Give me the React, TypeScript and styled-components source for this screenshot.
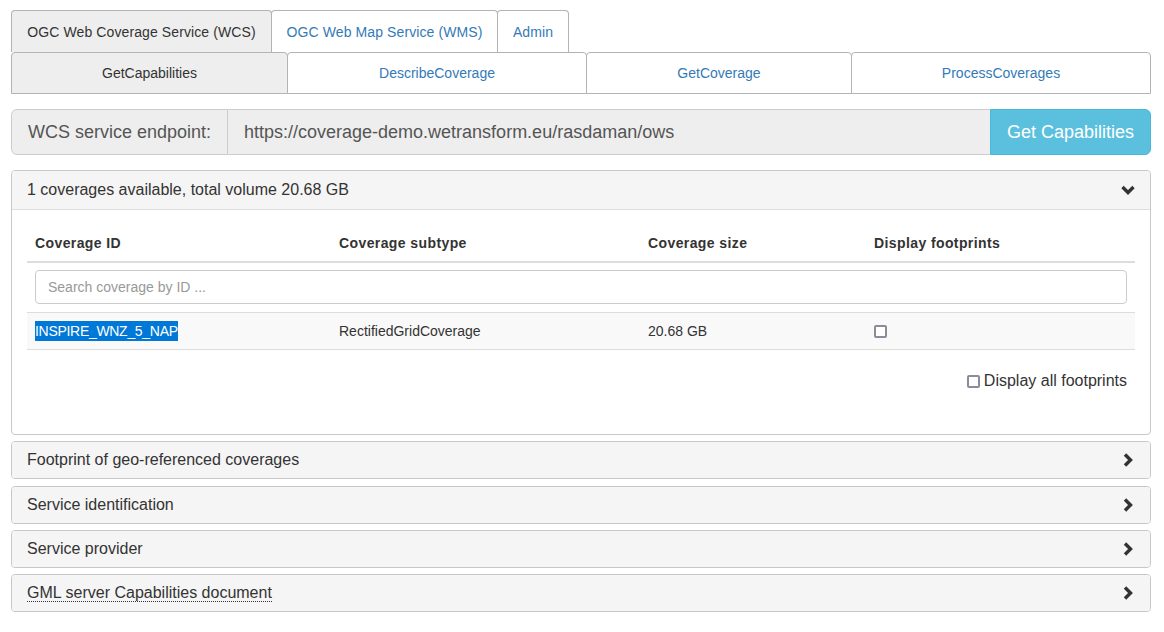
import React from 'react';
import styled, { createGlobalStyle } from 'styled-components';

const GlobalStyle = createGlobalStyle`
    body {
        margin: 0;
        background: #fff;
        font-family: 'Liberation Sans', Arial, sans-serif;
        font-size: 14px;
        color: #333;
    }
    * { box-sizing: border-box; }
`;

const Page = styled.div`
    padding: 10px 13px 0 11px;
`;

const TabRow = styled.div`
    display: flex;
`;

const TopTab = styled.div<{ active?: boolean; w: number }>`
    width: ${(p) => p.w}px;
    height: 42px;
    display: flex;
    align-items: center;
    justify-content: center;
    font-size: 14px;
    letter-spacing: 0.1px;
    white-space: nowrap;
    border: 1px solid #b3b3b3;
    border-bottom: none;
    border-radius: 4px 4px 0 0;
    background: ${(p) => (p.active ? '#efeeee' : '#fff')};
    color: ${(p) => (p.active ? '#333' : '#337ab7')};
    margin-right: -1px;
`;

const SubTabRow = styled.div`
    display: grid;
    grid-template-columns: 276px 299px 265px 1fr;
`;

const SubTab = styled.div<{ active?: boolean }>`
    height: 42px;
    display: flex;
    align-items: center;
    justify-content: center;
    font-size: 14px;
    border: 1px solid #b3b3b3;
    margin-right: -1px;
    border-radius: 4px 4px 0 0;
    background: ${(p) => (p.active ? '#efeeee' : '#fff')};
    color: ${(p) => (p.active ? '#333' : '#337ab7')};
    &:last-child { margin-right: 0; }
`;

const InputGroup = styled.div`
    display: flex;
    margin-top: 15px;
    height: 46px;
    font-size: 18px;
`;

const Addon = styled.div`
    flex-shrink: 0;
    white-space: nowrap;
    display: flex;
    align-items: center;
    padding: 0 16px;
    background: #eee;
    color: #555;
    border: 1px solid #ccc;
    border-radius: 6px 0 0 6px;
    width: 217px;
`;

const Endpoint = styled.div`
    flex: 1;
    min-width: 0;
    white-space: nowrap;
    display: flex;
    align-items: center;
    padding: 0 16px;
    background: #eee;
    color: #555;
    border-top: 1px solid #ccc;
    border-bottom: 1px solid #ccc;
`;

const InfoButton = styled.div`
    flex-shrink: 0;
    width: 161px;
    display: flex;
    align-items: center;
    justify-content: center;
    background: #5bc0de;
    border: 1px solid #46b8da;
    color: #fff;
    border-radius: 0 6px 6px 0;
`;

const Panel = styled.div<{ gap: number }>`
    margin-top: ${(p) => p.gap}px;
    border: 1px solid #c8c8c8;
    border-radius: 4px;
    overflow: hidden;
`;

const PanelHeading = styled.div<{ open?: boolean }>`
    height: ${(p) => (p.open ? 39 : 36)}px;
    display: flex;
    align-items: center;
    justify-content: space-between;
    padding: 0 15px;
    background: #f5f5f5;
    font-size: 16px;
    color: #333;
    border-bottom: ${(p) => (p.open ? '1px solid #ddd' : 'none')};
`;

const HeadingLink = styled.span`
    border-bottom: 1px dotted #333;
    line-height: 17px;
`;

const PanelBody = styled.div`
    padding: 15px 15px 43px;
`;

const Table = styled.div`
    display: grid;
    grid-template-columns: 304px 309px 226px 1fr;
`;

const HeadCell = styled.div`
    padding: 8px;
    line-height: 20px;
    font-weight: 700;
    font-size: 14px;
    letter-spacing: 0.4px;
    border-bottom: 2px solid #ddd;
`;

const SearchRow = styled.div`
    grid-column: 1 / -1;
    padding: 7px 8px 8px;
`;

const SearchInput = styled.input`
    width: 100%;
    height: 34px;
    border: 1px solid #ccc;
    border-radius: 4px;
    padding: 6px 12px;
    font-family: 'Liberation Sans', Arial, sans-serif;
    font-size: 14px;
    color: #555;
    &::placeholder { color: #999; }
`;

const Cell = styled.div`
    padding: 8px;
    line-height: 20px;
    background: #f9f9f9;
    border-top: 1px solid #ddd;
    border-bottom: 1px solid #ddd;
    display: flex;
    align-items: center;
`;

const Selected = styled.span`
    background: #0078d7;
    color: #fff;
    letter-spacing: -0.3px;
`;

const Box = styled.span`
    width: 13px;
    height: 13px;
    border: 2px solid #8e8a9a;
    border-radius: 2px;
    background: #fff;
    display: inline-block;
`;

const FootprintsRow = styled.div`
    display: flex;
    justify-content: flex-end;
    align-items: center;
    gap: 4px;
    margin-top: 21px;
    padding-right: 8px;
    font-size: 16px;
    line-height: 20px;
`;

const Chevron = ({ dir }: { dir: 'down' | 'right' }) => (
    <svg width="14" height="14" viewBox="0 0 14 14">
        {dir === 'down' ? (
            <path d="M1.5 4 L7 9.5 L12.5 4" stroke="#333" strokeWidth="3.4" fill="none" />
        ) : (
            <path d="M4 1.5 L9.5 7 L4 12.5" stroke="#333" strokeWidth="3.4" fill="none" />
        )}
    </svg>
);

const collapsed = [
    { title: 'Footprint of geo-referenced coverages', gap: 6 },
    { title: 'Service identification', gap: 7 },
    { title: 'Service provider', gap: 6 },
    { title: 'GML server Capabilities document', gap: 6, link: true },
];

const App = () => {
    return (
        <Page>
            <GlobalStyle />
            <TabRow>
                <TopTab active w={261}>
                    OGC Web Coverage Service (WCS)
                </TopTab>
                <TopTab w={227}>OGC Web Map Service (WMS)</TopTab>
                <TopTab w={72}>Admin</TopTab>
            </TabRow>
            <SubTabRow>
                <SubTab active>GetCapabilities</SubTab>
                <SubTab>DescribeCoverage</SubTab>
                <SubTab>GetCoverage</SubTab>
                <SubTab>ProcessCoverages</SubTab>
            </SubTabRow>

            <InputGroup>
                <Addon>WCS service endpoint:</Addon>
                <Endpoint>https://coverage-demo.wetransform.eu/rasdaman/ows</Endpoint>
                <InfoButton>Get Capabilities</InfoButton>
            </InputGroup>

            <Panel gap={15}>
                <PanelHeading open>
                    <span>1 coverages available, total volume 20.68 GB</span>
                    <Chevron dir="down" />
                </PanelHeading>
                <PanelBody>
                    <Table>
                        <HeadCell>Coverage ID</HeadCell>
                        <HeadCell>Coverage subtype</HeadCell>
                        <HeadCell>Coverage size</HeadCell>
                        <HeadCell>Display footprints</HeadCell>
                        <SearchRow>
                            <SearchInput placeholder="Search coverage by ID ..." />
                        </SearchRow>
                        <Cell>
                            <Selected>INSPIRE_WNZ_5_NAP</Selected>
                        </Cell>
                        <Cell>RectifiedGridCoverage</Cell>
                        <Cell>20.68 GB</Cell>
                        <Cell>
                            <Box />
                        </Cell>
                    </Table>
                    <FootprintsRow>
                        <Box />
                        <span>Display all footprints</span>
                    </FootprintsRow>
                </PanelBody>
            </Panel>

            {collapsed.map((c) => (
                <Panel gap={c.gap} key={c.title}>
                    <PanelHeading>
                        {c.link ? <HeadingLink>{c.title}</HeadingLink> : <span>{c.title}</span>}
                        <Chevron dir="right" />
                    </PanelHeading>
                </Panel>
            ))}
        </Page>
    );
};

export default App;
